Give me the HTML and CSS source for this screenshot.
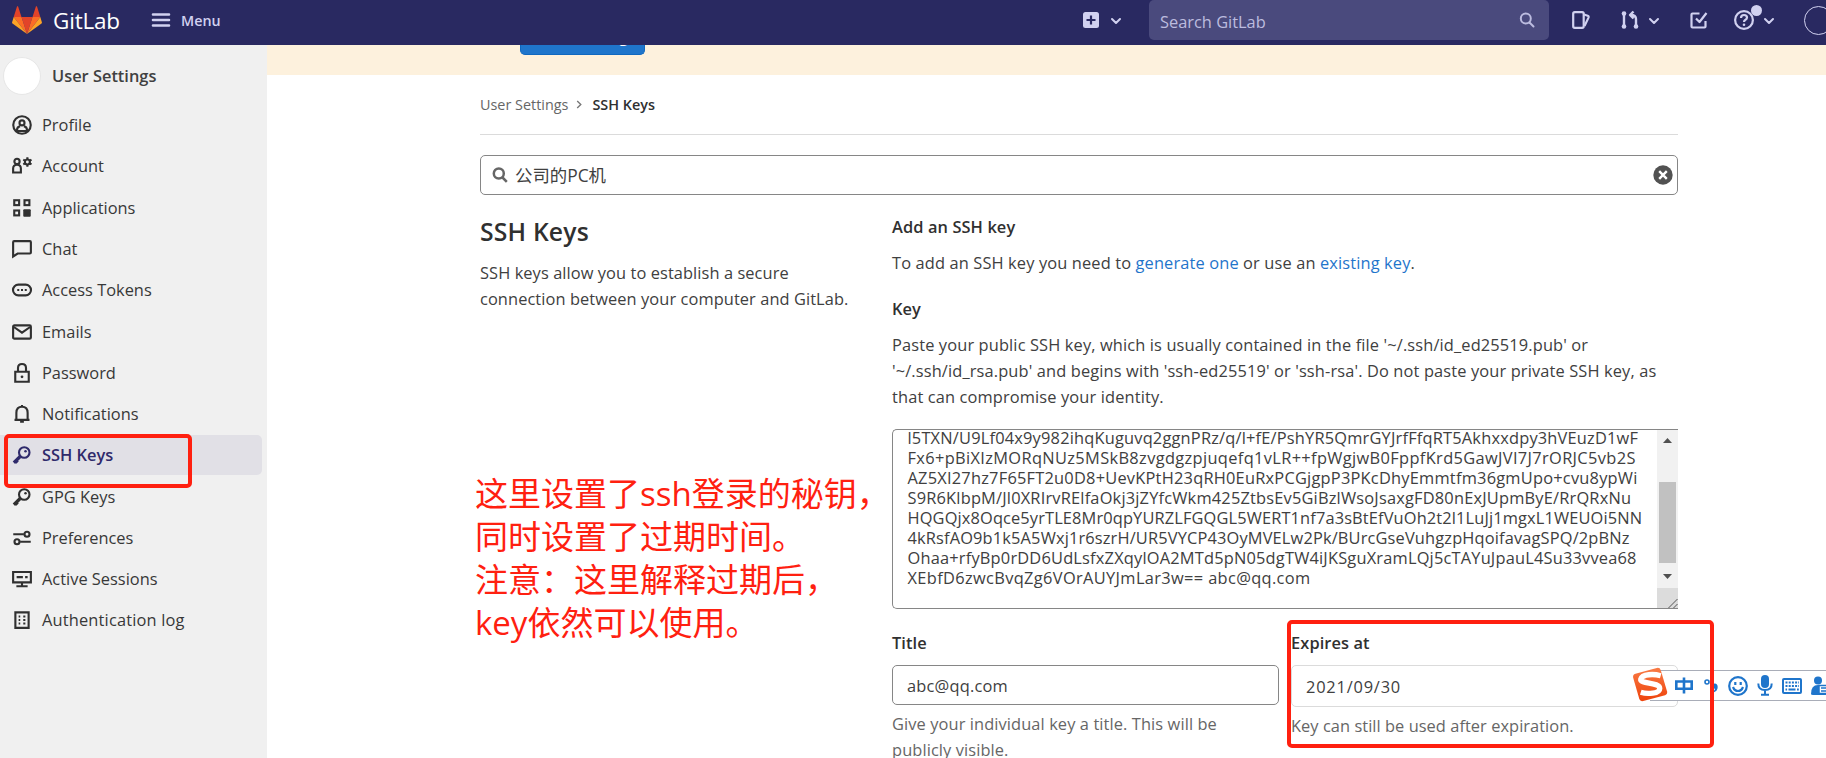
FILE: index.html
```html
<!DOCTYPE html>
<html lang="en">
<head>
<meta charset="utf-8">
<title>SSH Keys · User Settings · GitLab</title>
<link rel="stylesheet" href="styles.css">
</head>
<body>
<header class="navbar">
  <svg class="tanuki" viewBox="0 0 30 28"><path fill="#e24329" d="M15 28 20.5 11h-11z"/><path fill="#fc6d26" d="M15 28 9.500 11H1.700zM15 28l5.500-17h7.800z"/><path fill="#fca326" d="M1.700 11 .1 16.200c-.2.500 0 1 .4 1.300L15 28zM28.300 11l1.600 5.200c.2.500 0 1-.4 1.300L15 28z"/><path fill="#e24329" d="M1.700 11h7.800L6.100.5c-.2-.5-.9-.5-1.100 0zM28.300 11h-7.800L23.900.5c.2-.5.900-.5 1.100 0z"/></svg>
  <span class="brand">GitLab</span>
  <svg class="burger" viewBox="0 0 18 14"><path d="M1 1.500h16M1 7h16M1 12.500h16"/></svg>
  <span class="menu">Menu</span>
  <div class="nav-right">
    <svg class="plus" viewBox="0 0 16 16"><rect width="16" height="16" rx="2.500"/><path d="M8 3.500v9M3.500 8h9"/></svg>
    <svg class="chev c1" viewBox="0 0 10 6"><path d="m1 1 4 4 4-4"/></svg>
    <div class="nav-search"><span>Search GitLab</span><svg viewBox="0 0 16 16"><circle cx="6.800" cy="6.500" r="5"/><path d="m10.500 10.500 4 4"/></svg></div>
    <svg class="nicon issues" viewBox="0 0 18 18"><rect x="1.200" y="1.200" width="10.500" height="15.600" rx="1.500"/><path d="m12 3.500 3.700 1.300c.8.300 1.100 1 .8 1.800L12.500 15"/></svg>
    <svg class="nicon mr" viewBox="0 0 20 20"><path d="M4 4v12M16 16V9q0-4-5-4M13.500 1.500 10 5l3.500 3.500"/><circle class="f" cx="4" cy="3.500" r="2.300"/><circle class="f" cx="4" cy="16.500" r="2.300"/><circle class="f" cx="16" cy="16.500" r="2.300"/></svg>
    <svg class="chev c2" viewBox="0 0 10 6"><path d="m1 1 4 4 4-4"/></svg>
    <svg class="nicon todo" viewBox="0 0 18 18"><path d="M9.500 2.500h-7q-1 0-1 1v12q0 1 1 1h12q1 0 1-1V10M6 7.500l3.500 3.500L16.500 2"/></svg>
    <div class="help"><svg class="nicon" viewBox="0 0 20 20"><circle cx="10" cy="10" r="8.900"/><path d="M7 8q0-3 3-3t3 2.600q0 1.500-1.800 2.400-1.200.7-1.200 2"/><circle class="f" cx="10" cy="14.800" r="1.300"/></svg><i class="dot"></i></div>
    <svg class="chev c3" viewBox="0 0 10 6"><path d="m1 1 4 4 4-4"/></svg>
    <i class="user"></i>
  </div>
</header>

<div class="page">
<aside class="sidebar">
  <div class="context"><i class="avatar"></i><span>User Settings</span></div>
  <nav>
    <a class="item"><svg viewBox="0 0 16 16"><circle cx="8" cy="8" r="7"/><circle cx="8" cy="6.300" r="2"/><path d="M4 13.500V12q0-2.500 2.500-3M12 13.500V12q0-2.500-2.500-3M4.500 12.800h7"/></svg><span>Profile</span></a>
    <a class="item"><svg viewBox="0 0 16 16"><circle cx="4" cy="4.300" r="2.100"/><path d="M.9 13.200V10q0-3 3.100-3t3.100 3v3.200z"/><circle cx="12.300" cy="4.800" r="2"/><path d="M12.300 1v1.500M12.300 7v1.500M9 2.900l1.400.8M14.200 5.900l1.400.8M9 6.700l1.400-.8M14.200 3.700l1.400-.8"/></svg><span>Account</span></a>
    <a class="item"><svg viewBox="0 0 16 16"><rect x="1.800" y="1.800" width="3.900" height="3.900"/><rect x="10" y="1.800" width="3.900" height="3.900"/><rect x="1.800" y="10" width="3.900" height="3.900"/><rect class="f" x="9" y="9" width="6" height="6" rx=".8"/></svg><span>Applications</span></a>
    <a class="item"><svg viewBox="0 0 16 16"><path d="M.9 14V2.500q0-.8.800-.8h12.600q.8 0 .8.800v8.300q0 .8-.8.800H4.500z"/></svg><span>Chat</span></a>
    <a class="item"><svg viewBox="0 0 16 16"><rect x=".8" y="3.700" width="14.400" height="8.600" rx="4.300"/><path d="M4.200 8h1.600M7.200 8h1.600M10.200 8h1.600"/></svg><span>Access Tokens</span></a>
    <a class="item"><svg viewBox="0 0 16 16"><rect x=".9" y="2.700" width="14.200" height="10.600" rx="1"/><path d="m1.500 4 6.500 4.500L14.500 4"/></svg><span>Emails</span></a>
    <a class="item"><svg viewBox="0 0 16 16"><path d="M2.600 7h10.800v8H2.600zM4.800 7V4q0-3.200 3.200-3.200T11.200 4v3"/><circle class="f" cx="8" cy="11" r="1.100"/></svg><span>Password</span></a>
    <a class="item"><svg viewBox="0 0 16 16"><path d="M2 12.700h12M3.500 12V7q0-4.800 4.500-4.800T12.500 7v5M6.500 14.200h3M8 .8v1"/></svg><span>Notifications</span></a>
    <a class="item active"><svg viewBox="0 0 16 16"><circle cx="9.800" cy="6" r="4.200"/><circle class="f" cx="10.800" cy="5" r="1"/><path class="thick" d="m6.500 9.200-5 5M3 12.500l1.500 1.500"/></svg><span>SSH Keys</span></a>
    <a class="item"><svg viewBox="0 0 16 16"><circle cx="9.800" cy="6" r="4.200"/><circle class="f" cx="10.800" cy="5" r="1"/><path class="thick" d="m6.500 9.200-5 5M3 12.500l1.500 1.500"/></svg><span>GPG Keys</span></a>
    <a class="item"><svg viewBox="0 0 16 16"><path d="M1 5h8.500M6.500 11H15"/><circle cx="12" cy="5" r="2"/><circle cx="4" cy="11" r="2"/></svg><span>Preferences</span></a>
    <a class="item"><svg viewBox="0 0 16 16"><path d="M.9 2.400h14.200v8.300H.9zM3.700 6.500h5M10.500 6.500h2M8 11v2.500M3.500 13.800h9"/></svg><span>Active Sessions</span></a>
    <a class="item log"><svg viewBox="0 0 16 16"><path d="M2.700 1.900h10.600v12.400H2.700z"/><path d="M5.300 5.200h1.300M9 5.200h1.700M5.300 8h1.300M9 8h1.700M5.300 10.800h1.300M9 10.800h1.700"/></svg><span>Authentication log</span></a>
  </nav>
</aside>

<main class="main">
  <div class="banner"><div class="cta"><span>g</span></div></div>
  <div class="content">
    <div class="crumbs"><span>User Settings</span><svg viewBox="0 0 6 10"><path d="m1 1 4 4-4 4"/></svg><b>SSH Keys</b></div>
    <div class="search"><svg class="mag" viewBox="0 0 16 16"><circle cx="6.800" cy="6.500" r="5"/><path d="m10.500 10.500 4.300 4.300"/></svg><span>公司的PC机</span><svg class="clear" viewBox="0 0 20 20"><circle cx="10" cy="10" r="9.700"/><path d="m6.200 6.200 7.600 7.600M13.800 6.200l-7.600 7.600"/></svg></div>
    <div class="columns">
      <section class="intro">
        <h4>SSH Keys</h4>
        <p>SSH keys allow you to establish a secure<br>connection between your computer and GitLab.</p>
        <div class="note">这里设置了ssh登录的秘钥，<br>同时设置了过期时间。<br>注意：这里解释过期后，<br>key依然可以使用。</div>
      </section>
      <section class="form">
        <h5>Add an SSH key</h5>
        <p class="add">To add an SSH key you need to <a>generate one</a> or use an <a>existing key</a>.</p>
        <h5 class="keylabel">Key</h5>
        <p class="hint">Paste your public SSH key, which is usually contained in the file '~/.ssh/id_ed25519.pub' or<br>'~/.ssh/id_rsa.pub' and begins with 'ssh-ed25519' or 'ssh-rsa'. Do not paste your private SSH key, as<br>that can compromise your identity.</p>
        <div class="textarea">
          <div class="lines">
            <div>l5TXN/U9Lf04x9y982ihqKuguvq2ggnPRz/q/l+fE/PshYR5QmrGYJrfFfqRT5Akhxxdpy3hVEuzD1wF</div>
            <div>Fx6+pBiXIzMORqNUz5MSkB8zvgdgzpjuqefq1vLR++fpWgjwB0FppfKrd5GawJVI7J7rORJC5vb2S</div>
            <div>AZ5XI27hz7F65FT2u0D8+UevKPtH23qRH0EuRxPCGjgpP3PKcDhyEmmtfm36gmUpo+cvu8ypWi</div>
            <div>S9R6KlbpM/Jl0XRIrvRElfaOkj3jZYfcWkm425ZtbsEv5GiBzlWsoJsaxgFD80nExJUpmByE/RrQRxNu</div>
            <div>HQGQjx8Oqce5yrTLE8Mr0qpYURZLFGQGL5WERT1nf7a3sBtEfVuOh2t2l1LuJj1mgxL1WEUOi5NN</div>
            <div>4kRsfAO9b1k5A5Wxj1r6szrH/UR5VYCP43OyMVELw2Pk/BUrcGseVuhgzpHqoifavagSPQ/2pBNz</div>
            <div>Ohaa+rfyBp0rDD6UdLsfxZXqylOA2MTd5pN05dgTW4iJKSguXramLQj5cTAYuJpauL4Su33vvea68</div>
            <div>XEbfD6zwcBvqZg6VOrAUYJmLar3w== abc@qq.com</div>
          </div>
          <div class="scroll"><svg class="arrow" viewBox="0 0 9 5"><path d="M0 5 4.500 0 9 5z"/></svg><i class="thumb"></i><svg class="arrow" viewBox="0 0 9 5"><path d="m0 0 4.500 5L9 0z"/></svg><div class="grip"><svg viewBox="0 0 11 11"><path d="M1 10.500 10.500 1M6 10.500 10.500 6"/></svg></div></div>
        </div>
        <div class="fields">
          <div class="field title"><h5>Title</h5><div class="input">abc@qq.com</div><p>Give your individual key a title. This will be<br>publicly visible.</p></div>
          <div class="field expires"><h5>Expires at</h5><div class="input">2021/09/30</div><p>Key can still be used after expiration.</p></div>
        </div>
      </section>
    </div>
  </div>
</main>
</div>

<div class="ime">
  <svg class="sogou" viewBox="0 0 36 36"><defs><linearGradient id="sg" x2="0" y2="1"><stop stop-color="#f97b45"/><stop offset="1" stop-color="#ee430b"/></linearGradient></defs><path fill="url(#sg)" d="M3 7 25 1q3-.7 4 2l6.500 22q.8 3-2 4L11 35q-3 .7-4-2L.7 11Q0 8 3 7z"/><path class="s" d="M29 9C22 7 10 7 8.500 12.500 7.500 17.500 28 15.500 28 22c0 5.500-13 6-19.500 4"/></svg>
  <svg class="zh" viewBox="0 0 18 17"><path d="M1.300 4.500h15.400v7.300H1.300zM9 .5v16"/></svg>
  <svg class="punct" viewBox="0 0 14 16"><circle cx="3" cy="4" r="2"/><path class="f" d="M8 8q0-2.500 2.800-2.500T13.700 9q0 4-4.200 5.500v-1.500q1.500-.8 1.500-2.200Q8 10.800 8 8z"/></svg>
  <svg class="smile" viewBox="0 0 20 20"><circle cx="10" cy="10" r="8.800"/><path d="M7.300 6v3M12.700 6v3M5 11q1.500 4 5 4t5-4"/></svg>
  <svg class="mic" viewBox="0 0 16 21"><rect class="f" x="4" y="0" width="8" height="13" rx="4"/><path d="M1.300 8.500q0 6.500 6.700 6.500t6.700-6.500M8 15v4M4 19.800h8"/></svg>
  <svg class="kbd" viewBox="0 0 20 16"><rect x="1" y="1" width="18" height="14" rx="1"/><path stroke-dasharray="2 1.200" d="M3.500 4.600h13.500M3.500 8h13.500"/><path d="M3.500 11.600h1.600M6.500 11.600h7M15 11.600h1.800"/></svg>
  <svg class="person" viewBox="0 0 15 20"><circle class="f" cx="7" cy="4.500" r="4"/><path class="f" d="M0 18q0-9 7-9 3 0 8 2v8H2q-2 0-2-1z"/><path class="w" d="M8 9.500h8v8H8z"/><path class="d" d="M10 12h5M10 15h5"/></svg>
</div>
<div class="mark m1"></div>
<div class="mark m2"></div>
</body>
</html>
```
FILE: styles.css
```css
* { box-sizing: border-box; }
html, body { height: 100%; }
body { margin: 0; overflow: hidden; background: #fff; color: #404040; font: 16.400px/26px "Open Sans", "Noto Sans CJK SC", sans-serif; }
h4, h5, p { margin: 0; }
svg { display: block; flex: none; fill: none; overflow: visible; }
i { display: block; flex: none; }
a { color: #1f75cb; }

.navbar { display: flex; align-items: center; height: 45px; padding: 0 0 4px 12px; background: #292961; color: #d1d1f0; }
.tanuki { width: 30px; height: 28px; margin-top: -1px; }
.brand { width: 97px; margin-left: 11px; color: #fff; font-size: 22.500px; letter-spacing: -.2px; }
.burger { width: 18px; height: 14px; margin: -1px 11px 0 2px; stroke: #d1d1f0; stroke-width: 2.600; stroke-linecap: round; }
.menu { font-size: 14.300px; font-weight: 600; }
.nav-right { display: flex; align-items: center; width: 743px; height: 41px; margin-left: auto; }
.nav-right > * { flex: none; }
.plus { width: 16px; height: 16px; margin-top: -1px; fill: #d1d1f0; stroke: #292961; stroke-width: 2.200; }
.plus rect { stroke: none; }
.chev { width: 10px; height: 6px; stroke: #d1d1f0; stroke-width: 2; stroke-linecap: round; stroke-linejoin: round; }
.c1 { margin: 0 28px 0 12px; }
.nav-search { display: flex; align-items: center; justify-content: space-between; width: 400px; height: 40px; margin: -1px 23px 0 0; padding: 3px 14px 0 11px; border-radius: 5px; background: #4a4a7d; color: #bcbcdf; }
.nav-search svg { width: 16px; height: 16px; margin-top: -4px; stroke: #bcbcdf; stroke-width: 2; stroke-linecap: round; }
.nicon { width: 20px; height: 20px; margin-top: -1px; stroke: #d1d1f0; stroke-width: 2.200; stroke-linejoin: round; }
.nicon .f { fill: #d1d1f0; stroke: none; }
.issues { width: 18px; height: 18px; }
.mr { margin-left: 30px; stroke-width: 2.400; }
.c2 { margin: 0 31px 0 9px; }
.todo { width: 18px; height: 18px; }
.help { position: relative; margin: 0 10px 0 26px; }
.dot { position: absolute; top: -6px; right: -8px; width: 11px; height: 11px; border-radius: 50%; background: #d1d1f0; }
.user { width: 29px; height: 29px; margin: -1px -20px 0 30px; border: 1px solid #d1d1f0; border-radius: 50%; }

.page { display: flex; height: 713px; }
.sidebar { flex: none; width: 267px; background: #f0f0f0; }
.context { display: flex; align-items: center; height: 60.200px; padding: 1px 0 0 3px; font-weight: 600; }
.avatar { width: 38px; height: 38px; margin-right: 11px; border: 1px solid #e7e7e7; border-radius: 50%; background: #fff; }
.item { display: flex; align-items: center; width: 262px; height: 40px; margin-bottom: 1.280px; padding-left: 12px; border-radius: 0 5px 5px 0; color: #383838; }
.item svg { width: 20px; height: 20px; margin-right: 10px; stroke: #303030; stroke-width: 1.700; }
.item .f { fill: #303030; stroke: none; }
.item .thick { stroke-width: 2.600; }
.item.active { background: #e1e0e6; color: #2f2a6b; font-weight: 600; }
.item.active svg { stroke: #2f2a6b; }
.item.active .f { fill: #2f2a6b; }
.log { letter-spacing: .17px; }

.main { flex: 1; }
.banner { height: 30px; padding-left: 253px; background: #fdf1dd; }
.cta { width: 125px; height: 10px; overflow: hidden; border: 1px solid #1068bf; border-top: 0; border-radius: 0 0 5px 5px; background: #1f75cb; color: #fff; line-height: 20px; }
.cta span { display: block; margin: -19px 0 0 98px; }
.content { width: 1198px; margin-left: 213px; }
.crumbs { display: flex; align-items: center; height: 60px; border-bottom: 1px solid #dbdbdb; color: #666; font-size: 14.400px; }
.crumbs svg { width: 6px; height: 9px; margin: 0 10px 0 8px; stroke: #777; stroke-width: 1.500; }
.crumbs b { color: #303030; font-weight: 600; }
.search { display: flex; align-items: center; height: 40px; margin-top: 20px; padding: 0 4px 0 11px; border: 1px solid #868686; border-radius: 5px; }
.search span { flex: 1; margin-left: 7px; font-size: 17.400px; }
.mag { width: 16px; height: 16px; stroke: #666; stroke-width: 2.500; }
.clear { width: 20px; height: 20px; fill: #525252; stroke: #fff; stroke-width: 2.400; }
.clear circle { stroke: none; }
.columns { display: flex; padding-top: 19px; }
.intro { flex: none; width: 412px; }
.intro h4 { padding-top: 3px; color: #303030; font-size: 24.700px; font-weight: 600; letter-spacing: .2px; line-height: 30px; }
.intro p { margin-top: 13px; letter-spacing: .08px; }
.note { margin: 160px 0 0 -5px; color: #ff2010; font-size: 33px; line-height: 43px; white-space: nowrap; }
.form { width: 786px; }
h5 { color: #303030; font-size: inherit; font-weight: 600; letter-spacing: .1px; }
.add { margin-top: 10px; letter-spacing: .13px; }
.keylabel { margin-top: 20px; }
.hint { margin-top: 10px; letter-spacing: .13px; white-space: nowrap; }
.textarea { display: flex; height: 180px; margin-top: 19px; overflow: hidden; border: 1px solid #868686; border-right: 0; border-radius: 5px 0 0 5px; }
.lines { flex: 1; padding-left: 14.500px; line-height: 20px; white-space: nowrap; }
.lines div { height: 20px; letter-spacing: .19px; }
.lines div:nth-child(1) { margin-top: -2px; }
.lines div:nth-child(2) { letter-spacing: .35px; }
.lines div:nth-child(3) { letter-spacing: .22px; }
.lines div:nth-child(5) { letter-spacing: .13px; }
.lines div:nth-child(6) { letter-spacing: .15px; }
.lines div:nth-child(8) { letter-spacing: .35px; }
.scroll { display: flex; flex-direction: column; align-items: center; width: 21px; height: 180px; margin-top: -1px; padding-top: 9px; background: #f1f1f1; }
.arrow { width: 9px; height: 5px; fill: #505050; }
.thumb { width: 17px; height: 81px; margin: 39px 0 11px; background: #c1c1c1; }
.grip { display: flex; align-items: flex-end; justify-content: flex-end; width: 21px; height: 21px; margin-top: auto; background: #dcdcdc; }
.grip svg { width: 11px; height: 11px; stroke: #555; stroke-width: 1; }
.fields { display: flex; gap: 12px; margin-top: 21px; }
.field { width: 387px; }
.field p { margin-top: 6px; color: #666; letter-spacing: .1px; }
.expires p { letter-spacing: .05px; }
.input { display: flex; align-items: center; height: 40px; margin-top: 9px; padding: 1px 0 0 14px; border: 1px solid #868686; border-radius: 5px; letter-spacing: .2px; }
.expires .input { height: 42px; border-color: #dbdbdb; letter-spacing: .8px; }

.ime { position: absolute; top: 670px; left: 1650px; display: flex; align-items: center; width: 192px; height: 31px; border: solid #a9adb8; border-width: 1px 0; background: #fff; stroke: #1f75cb; stroke-width: 2.600; }
.ime .f { fill: #1f75cb; stroke: none; }
.sogou { width: 36px; height: 35px; margin: -2px 0 0 -18px; }
.sogou path { stroke: none; }
.sogou .s { stroke: #fff; stroke-width: 5.500; }
.zh { width: 18px; height: 17px; margin-left: 7px; }
.punct { width: 14px; height: 16px; margin-left: 11px; stroke-width: 1.600; }
.smile { width: 20px; height: 20px; margin-left: 10px; stroke-width: 2.200; }
.mic { width: 16px; height: 21px; margin-left: 9px; stroke-width: 2; }
.kbd { width: 20px; height: 16px; margin-left: 9px; stroke-width: 2; }
.person { width: 15px; height: 20px; margin-left: 9px; stroke-width: 1.500; }
.person .w { fill: #fff; }
.mark { position: absolute; border: 4px solid #ff2010; border-radius: 5px; }
.m1 { top: 434px; left: 4px; width: 188px; height: 54px; }
.m2 { top: 620px; left: 1287px; width: 427px; height: 128px; }
```
